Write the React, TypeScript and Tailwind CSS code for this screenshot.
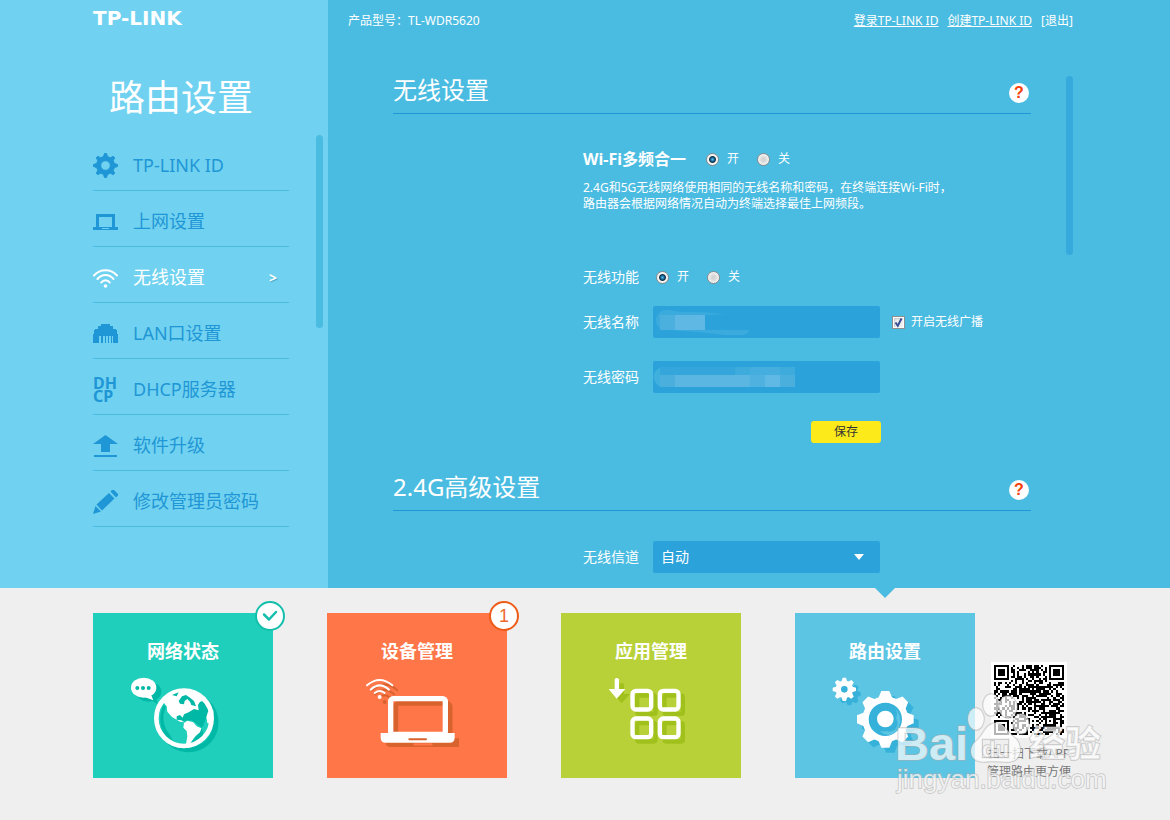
import React, { useState } from 'react';

const UI_FONT = "font-['Noto_Sans','Noto_Sans_CJK_SC',sans-serif]";

// Gear outline: trapezoid teeth around a root circle, with a round hole
function gearPath(cx: number, cy: number, outer: number, root: number, topHalf: number, baseHalf: number, hole: number) {
  const points: string[] = [];
  for (let i = 0; i < 8; i++) {
    const a = (i * Math.PI) / 4;
    const place = (r: number, w: number) => {
      const x = cx + r * Math.sin(a) + w * Math.cos(a);
      const y = cy - r * Math.cos(a) + w * Math.sin(a);
      points.push(`${x.toFixed(2)},${y.toFixed(2)}`);
    };
    place(root, -baseHalf);
    place(outer, -topHalf);
    place(outer, topHalf);
    place(root, baseHalf);
  }
  return `M${points.join('L')}ZM${cx - hole},${cy}a${hole},${hole} 0 1 0 ${hole * 2},0a${hole},${hole} 0 1 0 ${-hole * 2},0Z`;
}

const GearIcon = () => (
  <svg width="25" height="25" viewBox="0 0 25 25" fill="currentColor" stroke="currentColor" strokeWidth="1" strokeLinejoin="round" fillRule="evenodd">
    <path d={gearPath(12.5, 12.5, 12, 8.9, 1, 2, 4.8)} />
  </svg>
);

const LaptopIcon = () => (
  <svg width="25" height="25" viewBox="0 0 25 25" fill="currentColor" fillRule="evenodd">
    <path d="M3 5h19v13h3v3H0v-3h3zM6 8v10h13V8zM9 19v1h7v-1z" />
  </svg>
);

const WifiIcon = () => (
  <svg width="25" height="25" viewBox="0 0 25 25" fill="none" stroke="currentColor" strokeWidth="2" strokeLinecap="round">
    <path d="M1 10.5C7 3.5 18 3.5 24 10.5M4.500 14C9 8.500 16 8.500 20.500 14M8.300 17.500C10.500 14.500 14.500 14.500 16.700 17.500" />
    <circle cx="12.5" cy="21" r="1.8" fill="currentColor" stroke="none" />
  </svg>
);

const LanIcon = () => (
  <svg width="25" height="25" viewBox="0 0 25 25" fill="currentColor" shapeRendering="crispEdges">
    <path d="M8 3h9v2h3v3h3l1 2v3h1v9h-5v-7h-1v7h-1v-7h-2v7h-1v-7h-2v7h-1v-7h-2v7h-1v-7H9v7H8v-7H6v7H5v-7H5v7H0v-9h1v-3l1-2h3V5h3z" />
  </svg>
);

const DhcpIcon = () => (
  <span className="block h-[25px] w-[25px] text-base font-bold leading-[13px]">
    DH
    <br />
    CP
  </span>
);

const UploadIcon = () => (
  <svg width="25" height="25" viewBox="0 0 25 25" fill="currentColor">
    <path d="M12.500 2L25 11h-8v8H8v-8H0zM1 22h23v2H1z" />
  </svg>
);

const PencilIcon = () => (
  <svg width="25" height="25" viewBox="0 0 25 25" fill="currentColor">
    <path d="M3.500 15.500L16 4l5.500 5.500L9 21.500zM17.500 2.500L19 1h2l4 4v1.500L23 8.500zM2.500 17l5.500 5.500L0 25z" />
  </svg>
);

const menu = [
  { label: 'TP-LINK ID', Icon: GearIcon },
  { label: '上网设置', Icon: LaptopIcon },
  { label: '无线设置', Icon: WifiIcon, active: true },
  { label: 'LAN口设置', Icon: LanIcon },
  { label: 'DHCP服务器', Icon: DhcpIcon },
  { label: '软件升级', Icon: UploadIcon },
  { label: '修改管理员密码', Icon: PencilIcon },
];

function Sidebar() {
  return (
    <aside className="flex w-[calc(50%-257px)] min-w-[235px] shrink-0 justify-end bg-[#70d2f0]">
      <div className="w-[235px]">
        <div className="flex h-9 items-center font-['DejaVu_Sans',sans-serif] text-xl font-bold text-white">TP-LINK</div>
        <h1 className="mt-9 h-[63px] pl-4 text-4xl leading-[52px] text-white">路由设置</h1>
        <div className="flex justify-between pr-[5px]">
          <nav className="w-[196px]">
            {menu.map(({ label, Icon, active }) => (
              <a
                key={label}
                href="#"
                className={`flex h-14 items-center gap-[15px] border-b border-[#4bbce1] pt-1.5 text-lg ${active ? 'text-white' : 'text-[#1f96d5]'}`}
              >
                <Icon />
                <span className="whitespace-nowrap pb-0.5">{label}</span>
                {active && (
                  <span className="ml-auto pr-3 text-sm font-bold [text-shadow:1px_1px_1px_#4aa8c8]">&gt;</span>
                )}
              </a>
            ))}
          </nav>
          <div className="h-[193px] w-[7px] rounded-full bg-[#4bbce1]" />
        </div>
      </div>
    </aside>
  );
}

function SectionTitle({ children }: { children: React.ReactNode }) {
  return (
    <div className="flex h-[38px] items-start justify-between border-b border-[#1f96d5] pr-0.5">
      <h2 className="text-2xl leading-7 text-white">{children}</h2>
      <button
        aria-label="帮助"
        className="mt-[7px] h-5 w-5 rounded-full bg-white font-['Liberation_Sans',sans-serif] text-base font-bold leading-5 text-[#f4400a]"
      >
        ?
      </button>
    </div>
  );
}

function OnOff({ name }: { name: string }) {
  const [on, setOn] = useState(true);
  const radio =
    "h-[13px] w-[13px] appearance-none rounded-full border border-[#8a8a8a] bg-[radial-gradient(circle,#d4d4d4_20%,#f4f4f4_70%)] checked:bg-[radial-gradient(circle_at_center,#55c4f0_0,#1b6f9c_22%,#0d2c40_38%,#f4f4f4_50%)]";
  return (
    <div className="flex gap-[18px] text-xs">
      <label className="flex items-center gap-2">
        <input type="radio" name={name} checked={on} onChange={() => setOn(true)} className={radio} />
        开
      </label>
      <label className="flex items-center gap-2">
        <input type="radio" name={name} checked={!on} onChange={() => setOn(false)} className={radio} />
        关
      </label>
    </div>
  );
}

const fieldClass = 'h-8 w-full rounded-xs bg-[#2ca2da] px-2 text-sm text-white outline-none';

function WirelessForm() {
  const [broadcast, setBroadcast] = useState(true);
  return (
    <div className="ml-[190px] text-white">
      <div className="mt-[33px] flex h-6 items-center gap-5">
        <span className="text-base font-bold">Wi-Fi多频合一</span>
        <OnOff name="multi-band" />
      </div>
      <p className="mt-[9px] whitespace-nowrap text-xs leading-4">
        2.4G和5G无线网络使用相同的无线名称和密码，在终端连接Wi-Fi时，
        <br />
        路由器会根据网络情况自动为终端选择最佳上网频段。
      </p>

      <div className="mt-[49px] flex h-8 items-center">
        <span className="w-[73px] text-sm">无线功能</span>
        <OnOff name="wireless" />
      </div>

      <div className="mt-[13px] flex items-center">
        <label htmlFor="ssid" className="w-[70px] text-sm">无线名称</label>
        <div className="relative w-[227px]">
          <input id="ssid" type="text" className={fieldClass} />
          <svg className="pointer-events-none absolute inset-0" width="227" height="32" viewBox="249 33 681 96">
            <path fill="#3aabdc" d="M258 75C258 55 275 44 292 44L330 50 400 52 468 58 405 60V105H538C535 112 530 120 515 120H465L405 113 310 106 280 105C268 102 258 92 258 75Z" />
            <path fill="#4bb0de" d="M270 60h45v45h-45z" />
            <path fill="#5fb8e3" d="M315 60h90v45h-90z" />
          </svg>
        </div>
        <label className="flex items-center gap-1.5 pl-3 text-xs">
          <span className="grid">
            <input
              type="checkbox"
              checked={broadcast}
              onChange={() => setBroadcast(!broadcast)}
              className="peer col-start-1 row-start-1 h-[13px] w-[13px] appearance-none border border-[#8e8f8f] bg-[#f0f0f0] shadow-[inset_0_0_0_1px_#fff,inset_2px_2px_2px_#c4c8cc]"
            />
            <svg
              className="pointer-events-none invisible col-start-1 row-start-1 peer-checked:visible"
              width="13" height="13" viewBox="0 0 13 13" fill="none" stroke="#3b4f96" strokeWidth="2"
            >
              <path d="M3.500 6.500l2.300 3.300L9.500 2.500" />
            </svg>
          </span>
          开启无线广播
        </label>
      </div>

      <div className="mt-[23px] flex items-center">
        <label htmlFor="pwd" className="w-[70px] text-sm">无线密码</label>
        <div className="relative w-[227px]">
          <input id="pwd" type="text" className={fieldClass} />
          <svg className="pointer-events-none absolute inset-0" width="227" height="32" viewBox="249 198 681 96">
            <path fill="#3fb0dd" d="M270 219V275C258 268 251 258 251 246C251 234 258 224 270 219Z" />
            <path fill="#34a6db" d="M270 216h225v24H270z" />
            <path fill="#3dabdc" d="M495 216h180v24H495z" />
            <path fill="#45aedf" d="M540 216h90v24h-90z" />
            <path fill="#4bafdd" d="M270 240h45v36h-45zM630 240h45v36h-45z" />
            <path fill="#5cb6e2" d="M315 240h225v36H315z" />
            <path fill="#4fb1e0" d="M540 240h45v36h-45z" />
            <path fill="#60b9e4" d="M585 240h45v36h-45z" />
          </svg>
        </div>
      </div>

      <div className="mt-7 flex w-[298px] justify-end">
        <button className="h-[22px] w-[70px] rounded-[3px] bg-[#fcea1b] text-xs text-[#333]">保存</button>
      </div>
    </div>
  );
}

function ChannelForm() {
  return (
    <div className="ml-[190px] mt-[30px] flex items-center text-white">
      <label htmlFor="channel" className="w-[70px] text-sm">无线信道</label>
      <div className="relative w-[227px]">
        <select id="channel" className={`${fieldClass} appearance-none`}>
          <option>自动</option>
          <option>1</option>
          <option>6</option>
          <option>11</option>
        </select>
        <svg className="pointer-events-none absolute right-4 top-[13px]" width="10" height="6" viewBox="0 0 10 6" fill="#fff">
          <path d="M0 0h10L5 6z" />
        </svg>
      </div>
    </div>
  );
}

function MainPanel() {
  return (
    <main className="min-w-0 flex-1 bg-[#4bbce1]">
      <div className="max-w-[749px] pl-5">
        <header className="flex h-10 items-center justify-between pr-1 pt-0.5 text-xs text-white">
          <span>产品型号：TL-WDR5620</span>
          <div className="flex gap-[9px]">
            <a href="#" className="underline">登录TP-LINK ID</a>
            <a href="#" className="underline">创建TP-LINK ID</a>
            <a href="#">[退出]</a>
          </div>
        </header>
        <div className="mt-9 flex justify-between pl-[45px] pr-1">
          <div className="w-[638px]">
            <SectionTitle>无线设置</SectionTitle>
            <WirelessForm />
            <div className="mt-[30px]">
              <SectionTitle>2.4G高级设置</SectionTitle>
            </div>
            <ChannelForm />
          </div>
          <div className="h-[179px] w-[7px] rounded-full bg-[#36aadd]" />
        </div>
      </div>
    </main>
  );
}

function NetworkArt() {
  return (
    <svg width="180" height="84" viewBox="39 231 540 252">
      <g fill="#00b8a6">
        <ellipse cx="206" cy="290" rx="38" ry="30" />
        <path d="M205 308L236 330 222 296z" />
        <path fillRule="evenodd" d="M326 292a90 90 0 1 1-1 0zM326 310a73 73 0 1 0 1 0z" />
      </g>
      <circle cx="312" cy="370" r="76" fill="#1fcfbb" />
      <path fill="#00b8a6" d="M250 330C232 370 240 425 285 449L270 420C246 390 246 360 258 335zM285 365L340 340 352 325 372 316 388 335 386 350 372 385 366 398 335 376 308 378 290 374zM340 435L366 400 372 430 350 445 325 450z" />
      <ellipse cx="191" cy="278" rx="38" ry="30" fill="#fff" />
      <path fill="#fff" d="M188 304L220 316 212 296z" />
      <g fill="#00b8a6">
        <circle cx="172" cy="279" r="6" />
        <circle cx="189" cy="279" r="6" />
        <circle cx="206" cy="279" r="6" />
      </g>
      <circle cx="312" cy="370" r="83" fill="none" stroke="#fff" strokeWidth="14" />
      <path fill="#fff" d="M242 326L262 304 288 288 330 286 366 304 378 316 360 320 354 330 356 346 342 342 326 352 312 358 308 368 300 360 290 364 290 374 304 376 312 382 300 380 276 366 262 350 260 334 250 322z" />
      <path fill="#00b8a6" d="M296 318L306 304 318 300 330 308 342 318 348 334 334 330 330 320 322 312 314 318 312 328 300 326zM276 300L296 292 290 304z" />
      <path fill="#fff" d="M312 384L322 377 340 382 350 394 364 400 360 412 346 424 338 434 330 446 318 448 322 424 320 408 310 398zM400 344L384 350 379 366 382 384 398 390z" />
    </svg>
  );
}

function DeviceArt() {
  return (
    <svg width="180" height="84" viewBox="21 231 540 252" fill="none" strokeLinecap="round">
      <g stroke="#d9632f" strokeWidth="6">
        <path d="M155 286Q194 252 232 286M166 298Q194 272 222 298M178 308Q194 294 210 308" />
        <circle cx="194" cy="321" r="6" fill="#d9632f" stroke="none" />
        <rect x="227" y="325" width="163" height="105" rx="10" strokeWidth="15" />
      </g>
      <path fill="#d9632f" d="M197 430h220v26H212q-15 0-15-15z" />
      <path stroke="#ff7648" strokeWidth="7" d="M284 448h50" />
      <path stroke="#fff" strokeWidth="6" d="M141 271Q179 239 217 271M152 284Q179 258 207 284M164 294Q179 282 194 294" />
      <circle cx="179" cy="306" r="6" fill="#fff" />
      <rect x="212" y="311" width="164" height="107" rx="8" stroke="#fff" strokeWidth="16" />
      <path fill="#fff" d="M182 414h222v14q0 15-15 15H197q-15 0-15-15z" />
      <path stroke="#d9632f" strokeWidth="6" d="M268 433h50" />
    </svg>
  );
}

function AppsArt() {
  const squares = [[241, 281], [323, 281], [241, 364], [323, 364]];
  return (
    <svg width="180" height="84" viewBox="33 231 540 252" fill="none">
      <g stroke="#a0c01c" strokeWidth="13">
        {squares.map(([x, y]) => (
          <rect key={`${x}-${y}`} x={x + 20.5} y={y + 20.5} width="55" height="55" rx="5" />
        ))}
      </g>
      <path fill="#a0c01c" d="M208 268q7-8 14 0v29h18l-25 28-25-28h18z" />
      <g stroke="#fff" strokeWidth="13">
        {squares.map(([x, y]) => (
          <rect key={`${x}-${y}`} x={x + 6.5} y={y + 6.5} width="56" height="56" rx="10" />
        ))}
      </g>
      <path fill="#fff" d="M194 253q6-8 13 0v29h19l-26 29-24-29h18z" />
    </svg>
  );
}

function RouterArt() {
  return (
    <svg width="180" height="84" viewBox="45 276 540 252" fillRule="evenodd">
      <path fill="#36b2da" d={gearPath(208, 342, 34, 25, 5, 9, 10)} />
      <path fill="#36b2da" d={gearPath(331, 433, 85, 66, 13, 20, 35)} />
      <circle cx="316" cy="418" r="50" fill="#36b2da" />
      <path fill="#5dc5e4" d="M345 385a48 48 0 0 1-14 80a46 46 0 0 1-32-12a40 40 0 0 0 50-40a30 30 0 0 0-4-28z" />
      <circle cx="328" cy="430" r="25" fill="#36b2da" />
      <path fill="#fff" d={gearPath(193, 328, 35, 25, 5, 8, 10)} />
      <path fill="#fff" d={gearPath(316, 418, 85, 66, 12, 20, 50)} />
      <circle cx="316" cy="417" r="25" fill="#fff" />
    </svg>
  );
}

const cards = [
  {
    title: '网络状态',
    bg: 'bg-[#1fcfbb]',
    Art: NetworkArt,
    badgeClass: 'border-[#13bfab]',
    badge: (
      <svg width="16" height="12" viewBox="0 0 16 12" fill="none" stroke="#13bfab" strokeWidth="2.500" strokeLinecap="round" strokeLinejoin="round">
        <path d="M2 4.500l5 5L14 2" />
      </svg>
    ),
  },
  { title: '设备管理', bg: 'bg-[#ff7648]', Art: DeviceArt, badgeClass: 'border-[#ee5b16] text-[#ee6a30]', badge: '1' },
  { title: '应用管理', bg: 'bg-[#b9d138]', Art: AppsArt },
  { title: '路由设置', bg: 'bg-[#5dc5e4]', Art: RouterArt, current: true },
];

// 33x33 module code with finder and alignment squares
function QrCode() {
  const size = 33;
  const ring = (dx: number, dy: number, r: number) => {
    const d = Math.max(Math.abs(dx), Math.abs(dy));
    return r === 3 ? d !== 2 && d <= 3 : d !== 1;
  };
  let seed = 5620;
  let d = '';
  for (let y = 0; y < size; y++) {
    for (let x = 0; x < size; x++) {
      seed = (seed * 1103515 + 12345) % 2147483647;
      let dark = seed / 2147483647 > 0.46;
      if (x < 8 && y < 8) dark = ring(x - 3, y - 3, 3);
      else if (x > 24 && y < 8) dark = ring(x - 29, y - 3, 3);
      else if (x < 8 && y > 24) dark = ring(x - 3, y - 29, 3);
      else if (x > 23 && x < 29 && y > 23 && y < 29) dark = ring(x - 26, y - 26, 2);
      if (dark) d += `M${x} ${y}h1v1h-1z`;
    }
  }
  return (
    <svg className="bg-white p-[3px]" width="76" height="76" viewBox="0 0 33 33" shapeRendering="crispEdges">
      <path d={d} />
    </svg>
  );
}

function Watermark() {
  return (
    <svg className="pointer-events-none absolute -right-[35px] top-[100px]" width="218" height="110" viewBox="0 0 218 110">
      <g fill="#fff" fillOpacity="0.7" stroke="#aaa" strokeOpacity="0.6" strokeWidth="1.5" paintOrder="stroke">
        <text x="1" y="72" fontFamily="Liberation Sans" fontWeight="bold" fontSize="47">Bai</text>
        <ellipse cx="82" cy="31" rx="8" ry="11" />
        <ellipse cx="97" cy="17" rx="8" ry="11" />
        <ellipse cx="114" cy="19" rx="9" ry="11" />
        <ellipse cx="127" cy="36" rx="8" ry="10" />
        <path fillRule="evenodd" d="M102 35C110 35 112 43 120 49C129 55 129 73 115 74C108 74 96 73 90 74C75 74 74 60 82 53C90 47 91 35 102 35ZM88 51v19h27V51z" />
        <text x="88" y="69" fontFamily="Liberation Sans" fontWeight="bold" fontSize="22">du</text>
        <text x="135" y="69" fontFamily="Noto Sans CJK SC" fontWeight="bold" fontSize="36">经验</text>
        <text x="3" y="100" fontFamily="Liberation Sans" fontSize="26">jingyan.baidu.com</text>
      </g>
    </svg>
  );
}

function BottomBar() {
  return (
    <footer className="bg-[#efefef]">
      <div className="relative mx-auto flex h-[232px] max-w-[984px] items-start pt-[25px]">
        <div className="flex gap-[54px]">
          {cards.map(({ title, bg, Art, badge, badgeClass, current }) => (
            <a key={title} href="#" className={`relative flex h-[165px] w-[180px] flex-col items-center pt-6 text-white ${bg}`}>
              <span className="text-lg font-bold leading-7">{title}</span>
              <span className="mt-[7px]">
                <Art />
              </span>
              {badge && (
                <span className={`absolute -right-3 -top-3 flex h-[30px] w-[30px] items-center justify-center rounded-full border-2 bg-white font-['Liberation_Sans',sans-serif] text-lg ${badgeClass}`}>
                  {badge}
                </span>
              )}
              {current && (
                <svg className="absolute -top-[25px] left-20" width="20" height="10" viewBox="0 0 20 10" fill="#4bbce1">
                  <path d="M0 0h20L10 10z" />
                </svg>
              )}
            </a>
          ))}
        </div>
        <div className="ml-3 mt-[49px] flex flex-col items-center whitespace-nowrap text-xs leading-[18px] text-[#777]">
          <QrCode />
          <span className="mt-[7px]">扫一扫下载APP</span>
          <span>管理路由更方便</span>
        </div>
        <Watermark />
      </div>
    </footer>
  );
}

export default function App() {
  return (
    <div className={`min-h-screen overflow-hidden bg-[#efefef] ${UI_FONT}`}>
      <div className="flex h-[calc(100vh-232px)] overflow-hidden">
        <Sidebar />
        <MainPanel />
      </div>
      <BottomBar />
    </div>
  );
}
